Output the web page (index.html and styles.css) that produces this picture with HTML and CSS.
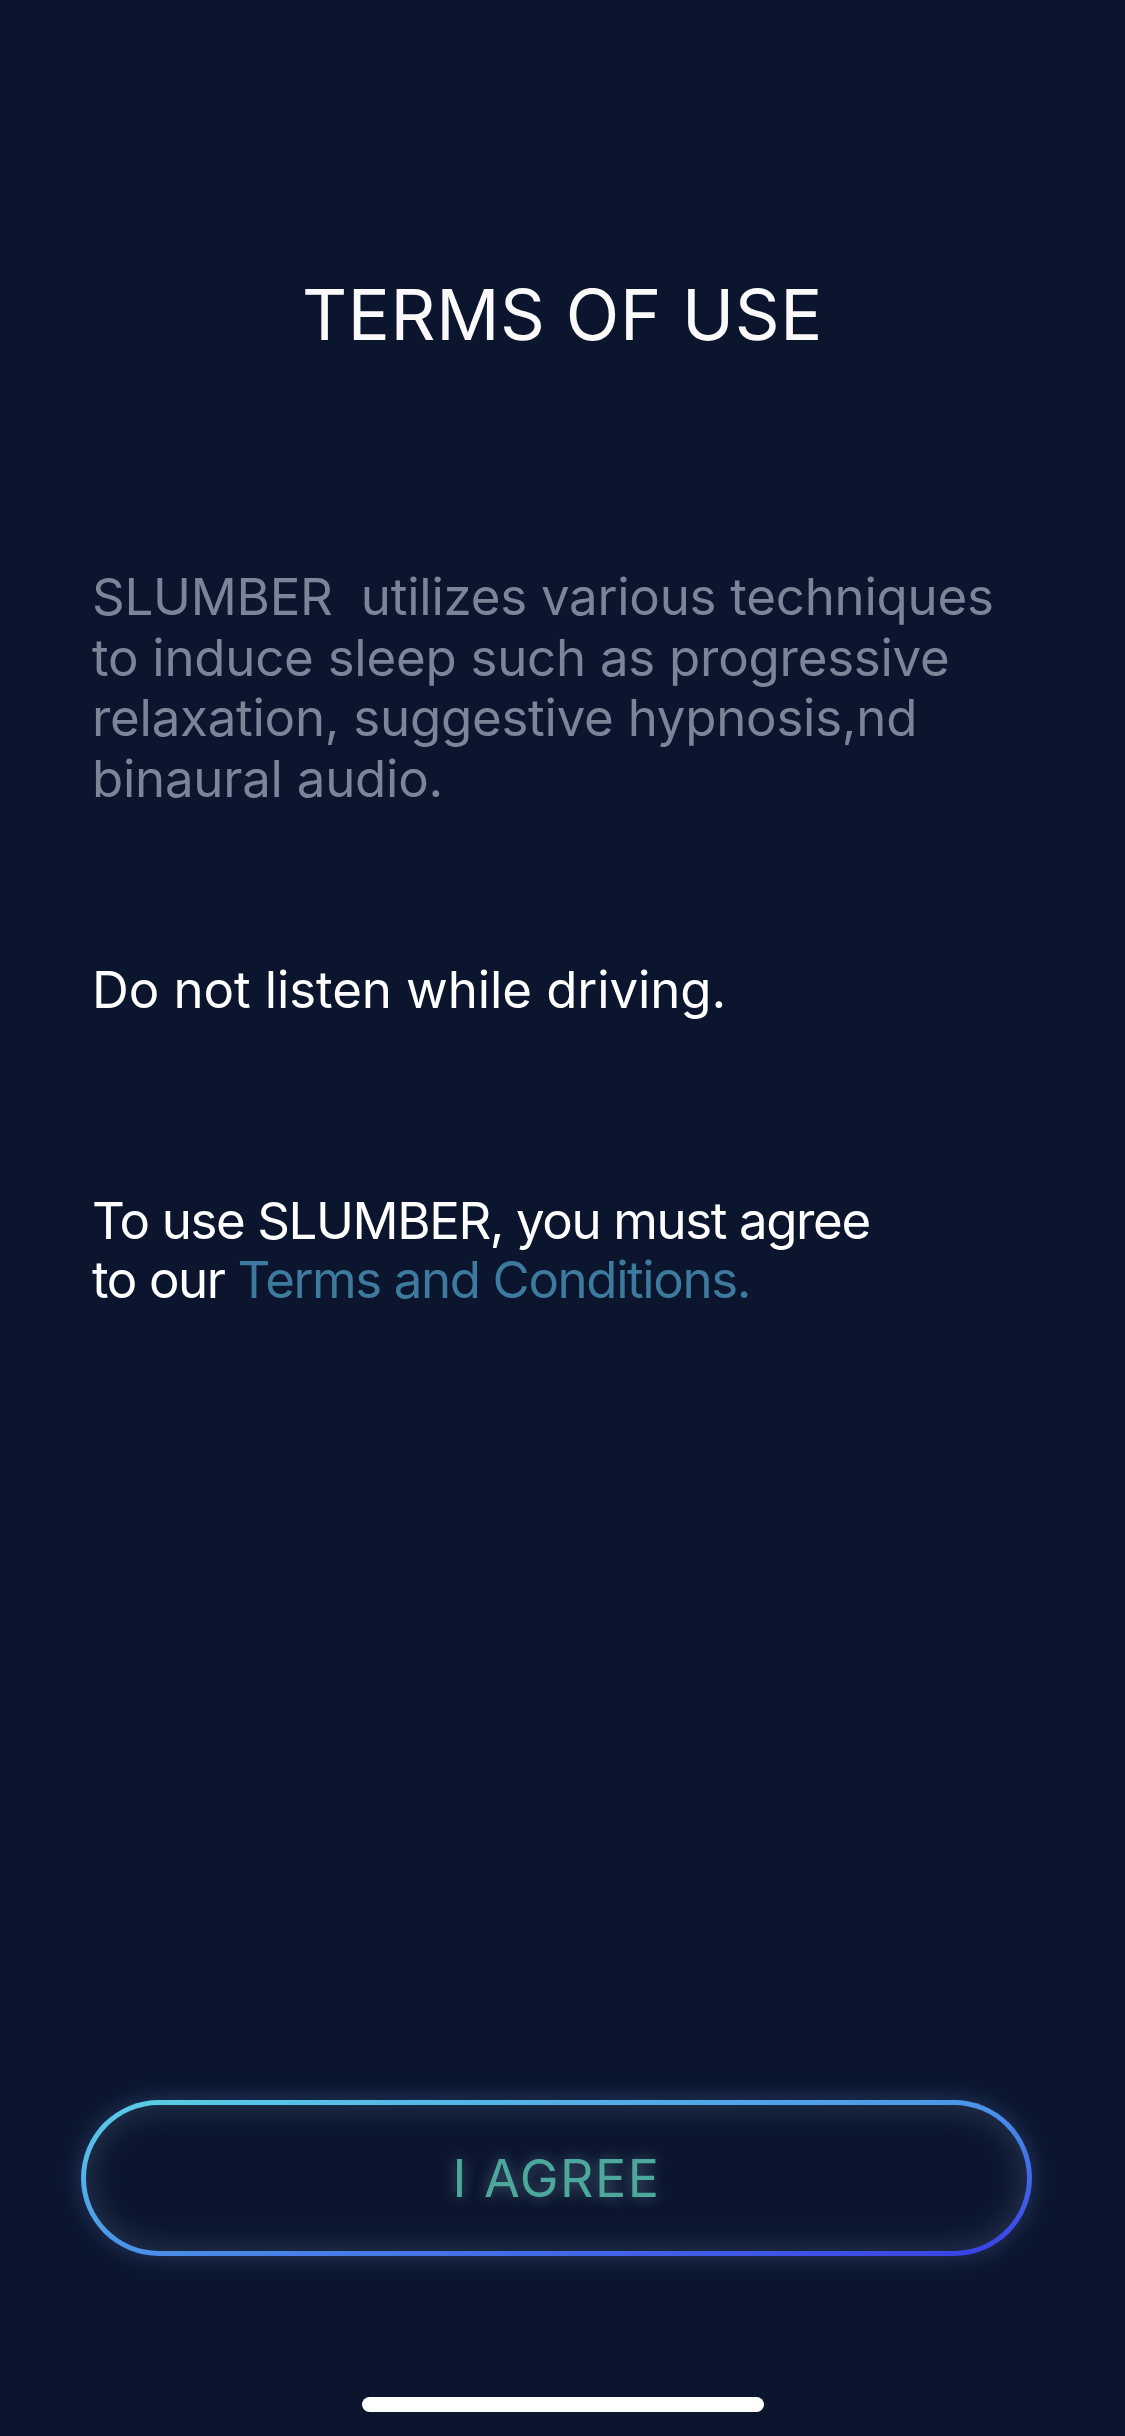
FILE: index.html
```html
<!DOCTYPE html>
<html lang="en">
<head>
<meta charset="utf-8">
<title>Terms of Use</title>
<link rel="stylesheet" href="styles.css">
</head>
<body>
<main class="screen">
  <h1 class="title">TERMS OF USE</h1>
  <p class="intro">SLUMBER&nbsp; utilizes various techniques to induce sleep such as progressive relaxation, suggestive hypnosis,nd binaural audio.</p>
  <p class="warning">Do not listen while driving.</p>
  <p class="agree-text">To use SLUMBER, you must agree<br>to our <a class="link" href="#">Terms and Conditions.</a></p>
  <div class="spacer"></div>
  <button class="agree-btn" type="button"><span class="agree-label">I AGREE</span></button>
  <div class="home-indicator"></div>
</main>
</body>
</html>
```
FILE: styles.css
```css
html, body {
  margin: 0;
  padding: 0;
  background: #0b162e;
}
.screen {
  width: 1125px;
  height: 2436px;
  display: flex;
  flex-direction: column;
  background: #0b162e;
  font-family: Inter, "Noto Sans", sans-serif;
  box-sizing: border-box;
}
.title {
  margin: 270px 0 0;
  font-size: 70px;
  line-height: 90px;
  font-weight: 400;
  letter-spacing: 0.6px;
  color: #fbf9fa;
  text-align: center;
}
.intro, .warning, .agree-text {
  margin: 0;
  padding: 0 92px;
  font-size: 51px;
  line-height: 60.6px;
  font-weight: 400;
}
.intro {
  margin-top: 207px;
  color: #7b8597;
  padding-right: 100px;
  letter-spacing: -0.25px;
}
.warning {
  margin-top: 151px;
  color: #ffffff;
  letter-spacing: -0.1px;
}
.agree-text {
  margin-top: 170px;
  color: #ffffff;
  line-height: 59px;
  letter-spacing: -1.4px;
}
.link {
  color: #3d7a9e;
  text-decoration: none;
}
.spacer {
  flex: 1;
}
.agree-btn {
  align-self: flex-start;
  width: 951px;
  height: 156px;
  margin: 0 0 141px 81px;
  padding: 0;
  border: 5px solid transparent;
  border-radius: 78px;
  background:
    linear-gradient(#0b162e, #0b162e) padding-box,
    linear-gradient(to bottom right, #5ad0e6 0%, #4b93e8 50%, #3a3ce6 100%) border-box;
  box-shadow: 0 0 22px rgba(100, 130, 210, 0.32), inset 0 0 32px rgba(130, 150, 195, 0.28);
  display: flex;
  align-items: center;
  justify-content: center;
  cursor: pointer;
}
.agree-label {
  font-family: Inter, "Noto Sans", sans-serif;
  font-size: 52px;
  font-weight: 400;
  letter-spacing: 1.5px;
  color: #4da89c;
  text-shadow: 0 0 14px rgba(140, 170, 200, 0.5);
}
.home-indicator {
  align-self: center;
  width: 402px;
  height: 15px;
  border-radius: 8px;
  background: #ffffff;
  margin-bottom: 24px;
}
```
